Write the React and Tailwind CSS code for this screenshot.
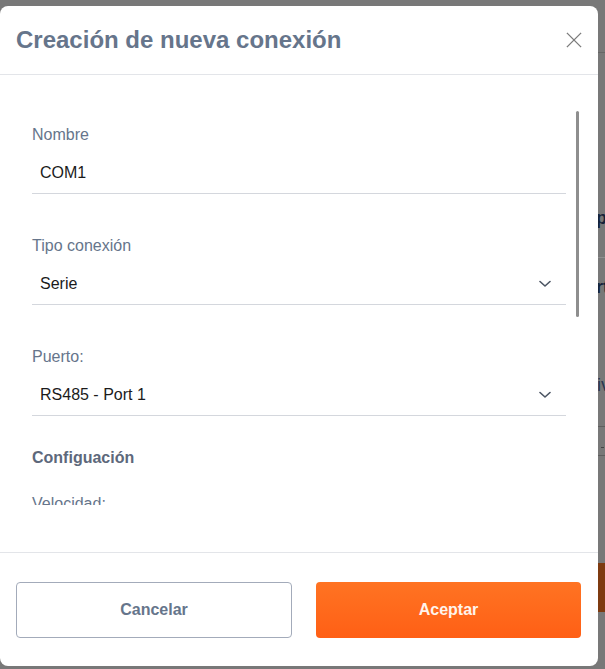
import React from 'react';

const Chevron = () => (
  <svg width="12" height="8" viewBox="0 0 12 8" fill="none" className="shrink-0">
    <path d="M1 1.5 L6 6 L11 1.5" stroke="#4b5563" strokeWidth="1.6" strokeLinecap="round" strokeLinejoin="round" />
  </svg>
);

const Field = ({ label, value, select, className = '' }) => (
  <div className={className}>
    <div className="text-base leading-6 text-[#66758b]">{label}</div>
    <div className="mt-[6px] h-[41px] border-b border-[#d4d7dd] flex items-center justify-between pl-2 pr-[15px]">
      <span className="text-base text-[#1b1b1b]">{value}</span>
      {select && <Chevron />}
    </div>
  </div>
);

export default function App() {
  return (
    <div
      className="w-[605px] h-[669px] bg-[#787878] overflow-hidden flex"
      style={{ fontFamily: '"Liberation Sans", Arial, sans-serif' }}
    >
      <div className="mt-[6px] h-[660px] w-[598px] shrink-0 bg-white rounded-lg flex flex-col overflow-hidden">
        {/* header */}
        <div className="h-[69px] shrink-0 border-b border-[#e3e5e9] flex items-center justify-between pl-[16px] pr-[16px]">
          <h2 className="text-[24px] font-bold text-[#66758b] leading-none">Creación de nueva conexión</h2>
          <button className="w-4 h-4 flex items-center justify-center" aria-label="Cerrar">
            <svg width="18" height="18" viewBox="0 0 18 18" fill="none">
              <path d="M1 1 L17 17 M17 1 L1 17" stroke="#7d7d7d" strokeWidth="1.5" />
            </svg>
          </button>
        </div>

        {/* body */}
        <div className="flex-1 flex flex-col">
          <div className="relative h-[430px] overflow-hidden">
            <div className="pt-[48px] pl-8 pr-8">
              <Field label="Nombre" value="COM1" />
              <Field label="Tipo conexión" value="Serie" select className="mt-[40px]" />
              <Field label="Puerto:" value="RS485 - Port 1" select className="mt-[40px]" />
              <div className="mt-[30px] text-base leading-6 font-bold text-[#5d687b]">Configuación</div>
              <div className="mt-[22px] text-base leading-6 text-[#66758b]">Velocidad:</div>
              <div className="mt-[6px] h-[41px] border-b border-[#d4d7dd]" />
            </div>
            <div className="absolute left-[576px] top-[36px] w-[3px] h-[206px] bg-[#8e8e8e] rounded-sm" />
          </div>
        </div>

        {/* footer */}
        <div className="shrink-0 border-t border-[#e3e5e9] pt-[29px] pb-[28px] pl-4 flex gap-6">
          <button className="w-[276px] h-[56px] rounded border border-[#a3abba] bg-white text-base font-bold text-[#66758b]">
            Cancelar
          </button>
          <button className="w-[265px] h-[56px] rounded bg-gradient-to-b from-[#ff7322] to-[#ff5f15] text-base font-bold text-[#fff4ec]">
            Aceptar
          </button>
        </div>
      </div>

      {/* dimmed page behind the modal */}
      <div className="flex-1 flex flex-col overflow-hidden text-[#1d2433] font-bold text-lg leading-none">
        <div className="mt-[52px] h-px bg-[#666]" />
        <div className="mt-[156px] -ml-[2px] whitespace-nowrap text-[#15223a]">pi</div>
        <div className="mt-[30px] h-px bg-[#8e8e8e]" />
        <div className="mt-[20px] -ml-[2px] whitespace-nowrap text-[#15223a]">rt</div>
        <div className="mt-[80px] -ml-[1px] whitespace-nowrap font-normal text-[#2a3650]">iv</div>
        <div className="mt-[32px] h-px bg-[#5e5e5e]" />
        <div className="mt-[20px] ml-[3px] w-[3px] h-px bg-[#444]" />
        <div className="mt-[7px] h-px bg-[#5e5e5e]" />
        <div className="mt-[107px] h-[49px] bg-[#7e3a10]" />
      </div>
    </div>
  );
}
